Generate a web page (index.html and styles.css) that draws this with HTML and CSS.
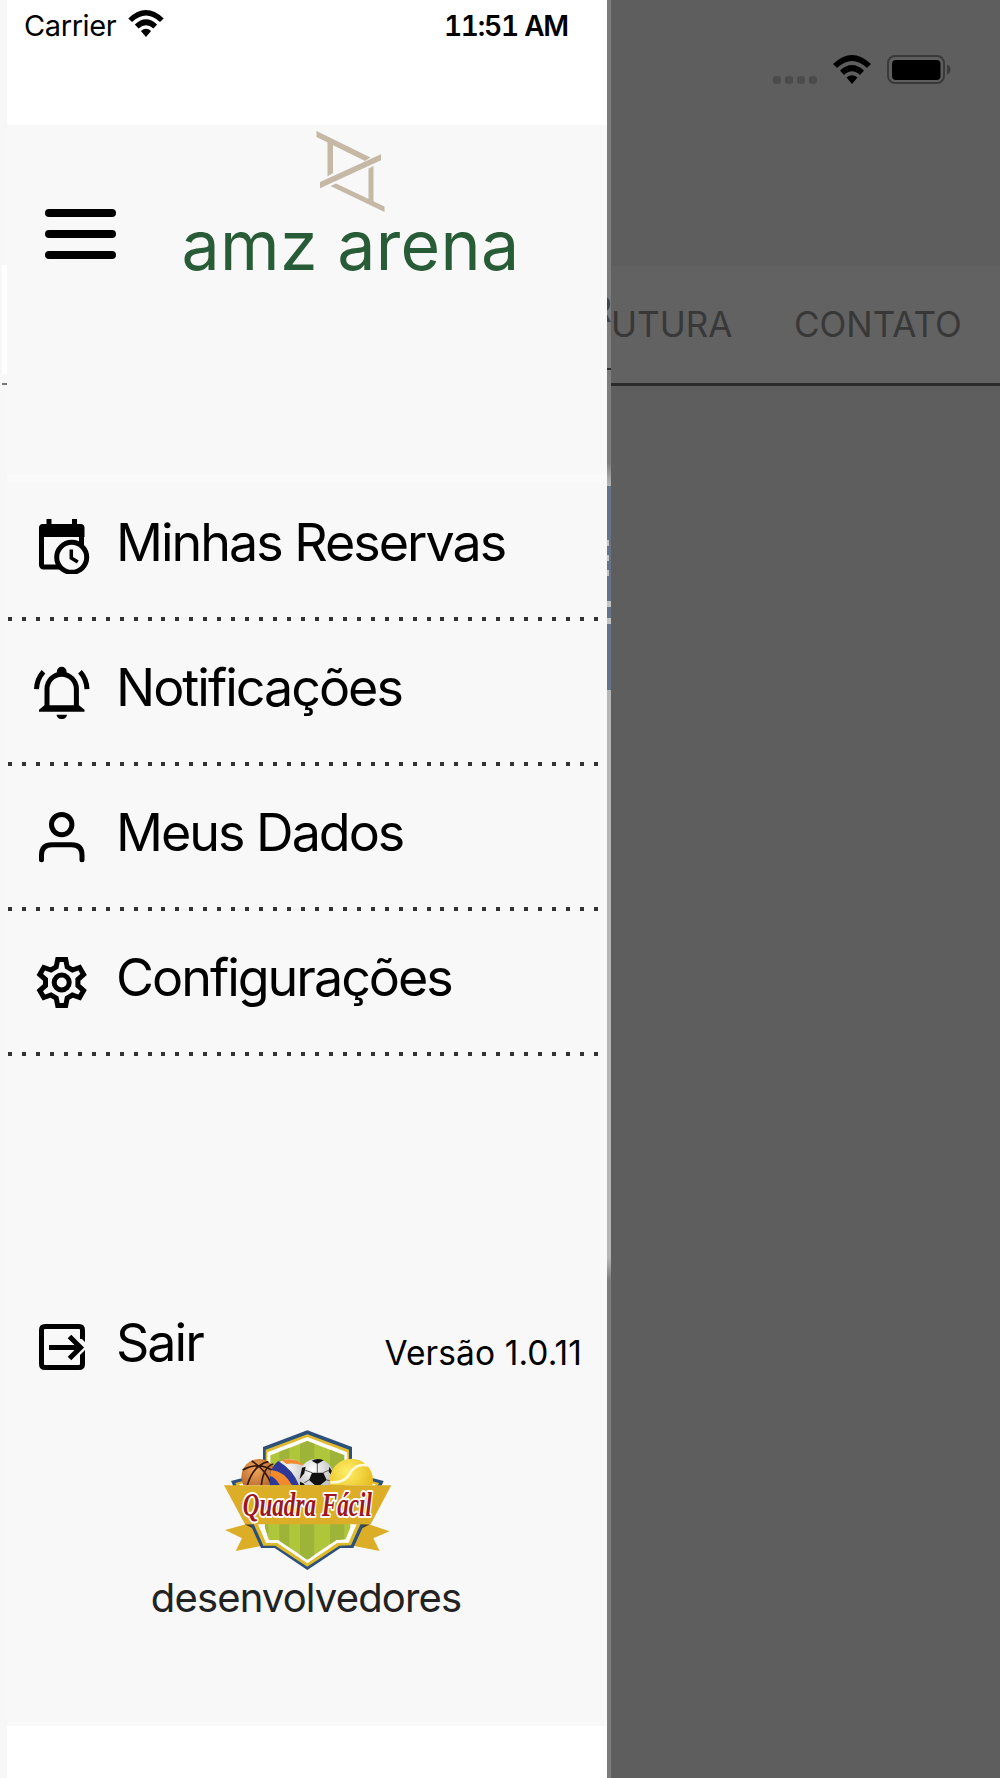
FILE: index.html
```html
<!DOCTYPE html>
<html lang="pt-BR">
<head>
  <meta charset="UTF-8">
  <title>AMZ Arena</title>
  <link rel="stylesheet" href="styles.css">
</head>
<body>
  <div class="tela">
    <div class="borda">
      <div class="borda-aba"></div>
      <div class="borda-linha"></div>
    </div>

    <aside class="menu">
      <div class="status">
        <span class="operadora">Carrier</span>
        <svg class="wifi" viewBox="0 0 38 29">
          <path d="M0 9Q19-9 38 9L34 13Q19-1 4 13Z"/>
          <path d="M7 15.500Q19 4.500 31 15.500L27 20Q19 12.500 11 20Z"/>
          <path d="M13.500 22.500Q19 18 24.500 22.500L19 29Z"/>
        </svg>
        <span class="hora">11:51 AM</span>
      </div>

      <header class="topo">
        <div class="hamburguer"><i></i><i></i><i></i></div>
        <div class="logo">
          <svg class="logo-simbolo" viewBox="131 0 80 90">
            <path d="M136.500 6L190.500 32.500L185 36L136.500 12Z"/>
            <path d="M147.500 15H153V48L147.500 51.500Z"/>
            <path d="M140 57L201 29.200V35.200L140 63.200Z"/>
            <path d="M188.500 43.500L193.500 41V78L188.500 75.500Z"/>
            <path d="M150.500 61L156 58.500L204.500 81.500V87Z"/>
          </svg>
          <span class="logo-texto">amz arena</span>
        </div>
      </header>

      <nav class="lista">
        <a class="item">
          <svg class="icone" viewBox="34 34 60 60">
            <rect x="41.500" y="47" width="40" height="40" rx="2"/>
            <path class="cheio" d="M39 57V48q0-4 4-4h3.500v-5h5v5H72v-5h5v5h3.500q4 0 4 4v9Z"/>
            <circle class="fundo" cx="71.700" cy="77.300" r="15"/>
            <path class="fino" d="M71.300 69.500V78l6.500 4"/>
          </svg>
          <span>Minhas Reservas</span>
        </a>
        <a class="item">
          <svg class="icone" viewBox="34 179.300 60 60">
            <path d="M47 229V209.500a14.700 15 0 0 1 29.400 0V229"/>
            <path class="cheio" d="M39 232v-2l5.500-4.500h34.500l5.500 4.500v2ZM56.500 235h10.500a5.300 5 0 0 1-10.500 0ZM56.800 195v-3a4.900 5 0 0 1 9.800 0v3Z"/>
            <path d="M43.500 192Q37 199 36.500 209.500M80 192Q86.500 199 87 209.500"/>
          </svg>
          <span>Notificações</span>
        </a>
        <a class="item">
          <svg class="icone" viewBox="34 23.700 60 60">
            <circle cx="61.700" cy="44.300" r="10.200"/>
            <path class="redondo" d="M41.500 79.500V75q0-10.500 10.500-10.500h19.500q10.500 0 10.500 10.500v4.500"/>
          </svg>
          <span>Meus Dados</span>
        </a>
        <a class="item">
          <svg class="icone" viewBox="-27.700 -33.500 60 60">
            <path d="M-4-23H4L5.500-15.500L10.700-12.500L17.900-15L21.900-8L16.200-3V3L21.900 8L17.900 15L10.700 12.500L5.500 15.500L4 23H-4L-5.500 15.500L-10.700 12.500L-17.900 15L-21.900 8L-16.200 3V-3L-21.900-8L-17.900-15L-10.700-12.500L-5.500-15.500Z"/>
            <circle cx="0" cy="0" r="7.500"/>
          </svg>
          <span>Configurações</span>
        </a>
      </nav>

      <div class="rodape">
        <a class="sair">
          <svg class="icone" viewBox="34 27 60 60">
            <path d="M82.500 49V40q0-3.500-3.500-3.500H45q-3.500 0-3.500 3.500V74q0 3.500 3.500 3.500H79q3.500 0 3.500-3.500V65"/>
            <path class="cheio" d="M80 46h5v6l-5-5ZM80 68v-3l5-5v8Z"/>
            <path d="M49 57.500H80M69.500 46.500L80.500 57.500L69.500 68.500"/>
          </svg>
          <span>Sair</span>
        </a>
        <span class="versao">Versão 1.0.11</span>
      </div>

      <div class="creditos">
        <svg class="brasao" viewBox="0 0 570 480">
          <defs>
            <clipPath id="escudo"><path d="M292 63L403 106V180L422 320L407 358L379 360L292 419L205 360H177L164 320L181 180V106Z"/></clipPath>
            <clipPath id="bolas"><rect x="60" y="90" width="460" height="106"/></clipPath>
            <radialGradient id="laranja" cx=".4" cy=".3" r=".8"><stop offset="0" stop-color="#f2a65a"/><stop offset="1" stop-color="#9c4f1c"/></radialGradient>
            <radialGradient id="amarela" cx=".4" cy=".3" r=".8"><stop offset="0" stop-color="#ffee69"/><stop offset="1" stop-color="#dfaf09"/></radialGradient>
            <radialGradient id="branca" cx=".4" cy=".3" r=".8"><stop offset="0" stop-color="#fff"/><stop offset="1" stop-color="#aaa"/></radialGradient>
          </defs>
          <path fill="#dcae27" d="M108 313L45 330L96 355L77 393L164 376L140 313ZM476 313L539 334L490 355L509 393L421 376L444 313Z"/>
          <path fill="#4b3a1c" d="M104 313H150L138 330ZM480 313H434L446 330Z"/>
          <path fill="#2c507c" d="M292 31L426 81V158L521 183L498 235L430 384H391L292 450L194 384H153L86 235L63 183L159 158V81Z"/>
          <path fill="#dfba2b" d="M292 43L417 89V165L507 189L423 376L388 377L292 440L196 377H160L76 189L167 165V89Z"/>
          <path fill="#fff" d="M292 51L412 97V171L497 193L440 313L416 368L382 369L292 430L202 369H168L144 313L88 193L172 171V97Z"/>
          <g clip-path="url(#escudo)">
            <path fill="#b0c63a" d="M150 50h290v380H150Z"/>
            <path fill="#9db438" d="M150 50h25v370h-25ZM208 50h30v370h-30ZM270 50h43v380h-43ZM360 50h43v370h-43Z"/>
          </g>
          <g clip-path="url(#bolas)">
            <circle cx="147" cy="170" r="53" fill="url(#laranja)"/>
            <path class="costura" d="M98 150Q150 120 198 160M112 196Q130 135 175 125M154 196Q160 140 190 132M125 123Q170 150 185 196"/>
            <circle cx="238" cy="173" r="56" fill="url(#branca)"/>
            <path fill="#2e3997" d="M205 123Q250 150 267 196H180Q175 145 205 123Z"/>
            <path fill="#f38b2c" d="M184 150Q225 155 246 196H210Q195 170 180 168ZM215 121Q255 110 283 137Q250 128 230 132Z"/>
            <circle cx="319" cy="170" r="53" fill="url(#branca)"/>
            <path fill="#111" d="M306 158H340L350 180L330 196H315L297 180ZM305 122Q322 113 341 121L322 132ZM276 143L287 140L283 160L269 177ZM358 140L369 158L368 170L356 155ZM270 185L280 190L285 196H270Z"/>
            <path class="gomo" d="M322 130V158M306 158L284 150M340 158L358 150M297 180L283 188M350 180L368 183"/>
            <circle cx="424" cy="181" r="65" fill="url(#amarela)"/>
            <path class="faixa" d="M361 187Q405 190 420 160T473 136"/>
          </g>
          <path fill="#dcae27" d="M42 196H544L482 313H105Z"/>
          <text class="brasao-texto" x="98" y="288" textLength="388" lengthAdjust="spacingAndGlyphs">Quadra Fácil</text>
        </svg>
        <span class="dev">desenvolvedores</span>
      </div>
    </aside>

    <div class="fresta">
      <div class="fresta-nav"><span>R</span></div>
      <div class="fresta-claro"></div>
      <div class="fresta-banner"><i></i><i></i><i></i><b></b><b></b></div>
      <div class="fresta-conteudo"></div>
    </div>

    <main class="fundo-app">
      <div class="status-app">
        <div class="sinal"><i></i><i></i><i></i><i></i></div>
        <svg class="wifi wifi-app" viewBox="0 0 38 29">
          <path d="M0 9Q19-9 38 9L34 13Q19-1 4 13Z"/>
          <path d="M7 15.500Q19 4.500 31 15.500L27 20Q19 12.500 11 20Z"/>
          <path d="M13.500 22.500Q19 18 24.500 22.500L19 29Z"/>
        </svg>
        <svg class="bateria" viewBox="0 0 64 29">
          <rect x="1" y="1" width="56" height="27" rx="7" fill="none" stroke="#3a3a3a" stroke-width="2"/>
          <rect x="5" y="5" width="48.500" height="20" rx="4"/>
          <path d="M60 9.500q3.500 1.500 3.500 5t-3.500 5Z" fill="#3a3a3a"/>
        </svg>
      </div>
      <div class="abas">
        <span class="aba-estrutura">UTURA</span>
        <span class="aba-contato">CONTATO</span>
      </div>
    </main>
  </div>
</body>
</html>
```
FILE: styles.css
```css
* {
  box-sizing: border-box;
}

body {
  margin: 0;
  font-family: Inter, 'Liberation Sans', sans-serif;
  color: #000;
}

.tela {
  display: flex;
  width: 1000px;
  height: 1778px;
  overflow: hidden;
  background: #5e5e5e;
}

span {
  white-space: nowrap;
}

/* faixa da tela anterior, à esquerda */
.borda {
  width: 7px;
  padding: 265px 0 0 2px;
  background: #f7f7f7;
}

.borda-aba {
  height: 109px;
  background: #fff;
}

.borda-linha {
  height: 2px;
  margin-top: 9px;
  background: #777;
}

/* menu lateral */
.menu {
  display: flex;
  flex-direction: column;
  width: 600px;
  height: 1726px;
  background: #f8f8f8;
  box-shadow: 0 60px #fff;
}

.status {
  display: flex;
  height: 125px;
  padding: 0 39px 0 17px;
  background: #fff;
}

.operadora {
  width: 104px;
  font-size: 29px;
  line-height: 51px;
  letter-spacing: -0.4px;
}

.wifi {
  width: 36px;
  height: 27px;
  margin-top: 10px;
}

.hora {
  margin-left: auto;
  font-size: 28px;
  font-weight: 600;
  font-variant-numeric: tabular-nums;
  line-height: 52px;
  letter-spacing: -1.2px;
}

.topo {
  display: flex;
  height: 357px;
  border-bottom: 7px solid #fafafa;
}

.hamburguer {
  display: flex;
  flex-direction: column;
  gap: 13.5px;
  width: 71px;
  margin: 84px 0 0 37.5px;
}

.hamburguer i {
  height: 7.7px;
  border-radius: 4px;
  background: #000;
}

.logo {
  display: flex;
  flex-direction: column;
  align-items: center;
  width: 350px;
  margin-left: 60px;
}

.logo-simbolo {
  width: 80px;
  height: 90px;
  fill: #c5b8a5;
}

.logo-texto {
  margin-top: -10px;
  font-size: 68px;
  line-height: 81px;
  letter-spacing: 0.3px;
  color: #285c37;
}

.item {
  display: flex;
  height: 145px;
  padding: 32px 0 0 27px;
  background: repeating-linear-gradient(90deg, #333 0 4px, transparent 4px 13.95px) 0.5px 135px / 592px 4px no-repeat;
}

.icone {
  flex: none;
  width: 60px;
  height: 60px;
  fill: none;
  stroke: #000;
  stroke-width: 5;
}

.icone .cheio {
  fill: #000;
  stroke: none;
}

.icone .fundo {
  fill: #f8f8f8;
}

.icone .fino {
  stroke-width: 3.5;
}

.icone .redondo {
  stroke-linecap: round;
}

.item span,
.sair span {
  margin: 1px 0 0 22px;
  font-size: 52px;
  line-height: 56px;
  letter-spacing: -2px;
}

.rodape {
  display: flex;
  justify-content: space-between;
  height: 103px;
  margin-top: 255px;
  padding-left: 27px;
}

.sair {
  display: flex;
  align-items: flex-start;
}

.sair span {
  line-height: 50px;
}

.versao {
  margin: 14px 25px 0 0;
  font-size: 33.5px;
  line-height: 44px;
  letter-spacing: 0.1px;
}

.creditos {
  display: flex;
  flex-direction: column;
  align-items: center;
}

.brasao {
  width: 190px;
  height: 160px;
  margin-right: 4px;
}

.brasao-texto {
  font-family: 'Liberation Serif', serif;
  font-size: 104px;
  font-style: italic;
  font-weight: bold;
  fill: #9d1720;
  stroke: #fff;
  stroke-width: 12;
  stroke-linejoin: round;
  paint-order: stroke;
}

.costura {
  fill: none;
  stroke: #35190c;
  stroke-width: 5;
}

.gomo {
  fill: none;
  stroke: #555;
  stroke-width: 3;
}

.faixa {
  fill: none;
  stroke: #fffbd8;
  stroke-width: 8;
}

.dev {
  margin: -6px 2px 0 0;
  font-size: 40px;
  line-height: 48px;
  letter-spacing: -0.85px;
  color: #222;
}

/* fresta entre o menu e a tela escurecida */
.fresta {
  width: 4px;
  overflow: hidden;
  background: #7c7c7c;
}

.fresta-nav {
  height: 370px;
  padding-top: 288px;
  border-bottom: 2px solid #2c2c2c;
}

.fresta-nav span {
  display: block;
  margin-left: -17.5px;
  font-size: 35px;
  line-height: 42px;
  color: #444;
}

.fresta-claro {
  height: 116px;
  background: linear-gradient(#7c7c7c 80%, #b8b8b8);
}

.fresta-banner {
  height: 204px;
  padding-top: 54px;
  background: #647388;
}

.fresta-banner i {
  display: block;
  width: 2px;
  height: 6px;
  margin-bottom: 9px;
  background: #c4c4c4;
}

.fresta-banner b {
  display: block;
  height: 6px;
  margin: 25px 0 -14px;
  background: #c4c4c4;
}

.fresta-conteudo {
  height: 591px;
  background: linear-gradient(#b6b6b6 96%, #7c7c7c);
}

/* tela por baixo do menu */
.fundo-app {
  width: 389px;
}

.status-app {
  display: flex;
  height: 266px;
  padding: 55px 0 0 162px;
}

.sinal {
  display: flex;
  gap: 4px;
  margin-top: 20.5px;
}

.sinal i {
  width: 8px;
  height: 8px;
  border-radius: 3px;
  background: #4b4b4b;
}

.wifi-app {
  width: 38px;
  height: 29px;
  margin: 0 0 0 16px;
}

.bateria {
  width: 64px;
  height: 29px;
  margin-left: 16px;
}

.abas {
  display: flex;
  height: 120px;
  padding-top: 37px;
  border-bottom: 3px solid #2a2a2a;
  background: #626262;
  font-size: 35px;
  line-height: 42px;
  color: #383838;
}

.aba-estrutura {
  width: 183px;
}
```
